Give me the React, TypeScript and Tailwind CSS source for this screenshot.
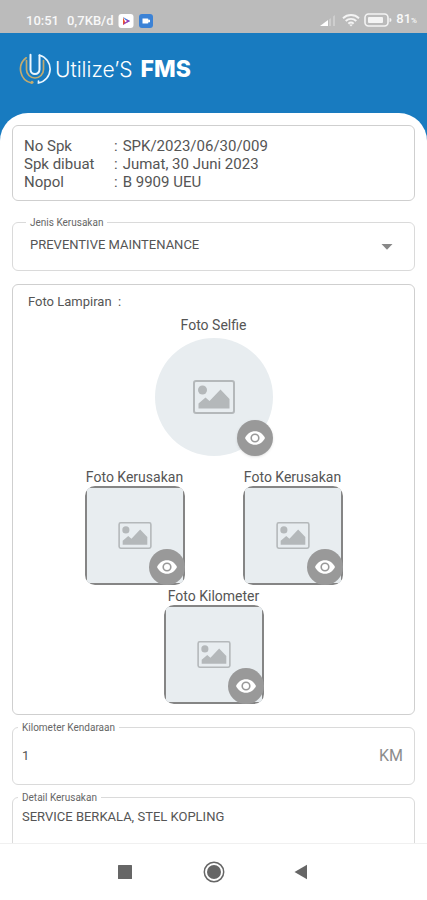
import type { ReactNode } from "react";

const SPK_INFO = [
  { label: "No Spk", value: "SPK/2023/06/30/009" },
  { label: "Spk dibuat", value: "Jumat, 30 Juni 2023" },
  { label: "Nopol", value: "B 9909 UEU" },
];

const StatusBar = () => (
  <div className="flex h-[33px] shrink-0 items-end bg-[#bbbbbb] pb-1 pl-[26px] pr-2.5 text-[13px] font-medium text-[#f8f8f8]">
    <span className="leading-4">10:51</span>
    <span className="ml-2 leading-4">0,7KB/d</span>
    <svg className="ml-1 h-4 w-4" viewBox="0 0 16 16" aria-hidden="true">
      <rect x="0.5" y="1" width="15" height="14" rx="3" fill="#fff" />
      <path d="M5 4v8l2.5-2z" fill="#e8542f" />
      <path d="M5 4l7 4-2.5 1.4z" fill="#3a7be0" />
      <path d="M5 12l7-4-3.4-1.4z" fill="#9a3fb5" />
      <path d="M7 6.8v2.4L9.2 8z" fill="#fff" />
    </svg>
    <svg className="ml-1 h-4 w-4" viewBox="0 0 16 16" aria-hidden="true">
      <rect x="1" y="1" width="14" height="14" rx="3" fill="#3b82d6" />
      <path d="M4.500 5.500h5a1 1 0 0 1 1 1v.8l1.500-.8v3l-1.500-.8v.8a1 1 0 0 1-1 1h-5z" fill="#fff" />
    </svg>

    <div className="ml-auto flex items-center gap-1">
      <svg className="h-4 w-5" viewBox="0 0 20 16" aria-hidden="true">
        <path d="M2 14l8-6v6z" fill="#fff" />
        <path d="M11 7.500l2-1.500v8h-2zM15 4.500l2-1.500v11h-2z" fill="#cecece" />
      </svg>
      <svg className="h-4 w-[18px]" viewBox="0 0 18 16" fill="none" stroke="#f4f4f4" strokeWidth="1.900" aria-hidden="true">
        <path d="M1 6.200c4.600-4.300 11.400-4.300 16 0M3.700 9c3-2.800 7.600-2.800 10.600 0M6.300 11.600c1.600-1.400 3.800-1.400 5.400 0" />
        <path d="M9 14.500l-1.800-2h3.600z" fill="#f4f4f4" stroke="none" />
      </svg>
      <svg className="h-4 w-7" viewBox="0 0 28 16" aria-hidden="true">
        <rect x="1" y="2" width="23" height="12" rx="3.500" fill="none" stroke="#f4f4f4" strokeWidth="1.600" />
        <rect x="4" y="5" width="15" height="6" rx="1" fill="#f4f4f4" />
        <path d="M25.500 6v4a2 2 0 0 0 2-2 2 2 0 0 0-2-2z" fill="#f4f4f4" />
      </svg>
      <span className="leading-4">
        81<span className="text-[8px]">%</span>
      </span>
    </div>
  </div>
);

const Logo = () => (
  <svg className="h-8 w-8" viewBox="0 0 32 32" fill="none" strokeLinecap="round" aria-hidden="true">
    <path d="M7.200 4.800A14.200 14.200 0 0 0 12.500 30" stroke="#c2ab70" strokeWidth="1.700" />
    <path d="M7.500 7.500V16.500a8.500 8.500 0 0 0 17 0V7.500" stroke="#c2ab70" strokeWidth="1.700" />
    <path d="M20.500 2.300A14.200 14.200 0 0 1 19.500 30v-2" stroke="#eaf6ff" strokeWidth="1.700" />
    <path d="M11.500 1.800V16.500a4.500 4.500 0 0 0 9 0V2.300" stroke="#eaf6ff" strokeWidth="2" />
    <circle cx="13" cy="29.300" r="1.500" fill="#c2ab70" />
  </svg>
);

const PictureIcon = ({ className }: { className: string }) => (
  <svg className={className} viewBox="0 0 42 34" aria-hidden="true">
    <rect x="1" y="1" width="40" height="32" rx="2" fill="none" stroke="#b4b8ba" strokeWidth="2" />
    <circle cx="9.500" cy="10" r="4.500" fill="#b4b8ba" />
    <path d="M5.500 28.500v-5l7-6 4 3.500L27.500 9.500l9 9.500v9.500z" fill="#b4b8ba" />
  </svg>
);

const ViewButton = ({ label, className }: { label: string; className: string }) => (
  <button
    type="button"
    aria-label={label}
    className={`absolute flex h-9 w-9 items-center justify-center rounded-full bg-[#999999] ${className}`}
  >
    <svg className="h-5 w-5" viewBox="0 0 20 20" aria-hidden="true">
      <path d="M0 10C2 5.700 5.700 3.200 10 3.200S18 5.700 20 10c-2 4.300-5.700 6.800-10 6.800S2 14.300 0 10z" fill="#fff" />
      <circle cx="10" cy="10" r="3.800" fill="#fff" stroke="#999999" strokeWidth="1.600" />
    </svg>
  </button>
);

const PhotoTile = ({ title }: { title: string }) => (
  <div className="flex flex-col items-center">
    <span className="text-sm leading-[18px]">{title}</span>
    <div className="relative h-[99px] w-[100px] rounded-[10px] border-2 border-[#858585]">
      <div className="flex h-full items-center justify-center rounded-[3px] bg-[#e8edf0]">
        <PictureIcon className="h-[27px] w-[34px]" />
      </div>
      <ViewButton label={`Lihat ${title}`} className="-bottom-0.5 -right-0.5" />
    </div>
  </div>
);

// Outlined box with its label sitting on the top border
const Field = ({ id, label, labelClass, className, children }: {
  id: string;
  label: string;
  labelClass: string;
  className: string;
  children: ReactNode;
}) => (
  <div className={`relative rounded-md border border-[#dadada] ${className}`}>
    <label htmlFor={id} className={`absolute -top-2 bg-white px-1 text-[10px] leading-4 text-[#666] ${labelClass}`}>
      {label}
    </label>
    {children}
  </div>
);

const App = () => {
  return (
    <div className="flex h-screen flex-col bg-[#187bc0] font-['Roboto',sans-serif] text-[#555]">
      <StatusBar />

      <header className="flex h-20 shrink-0 items-center pb-2 pl-[19px] text-white">
        <Logo />
        <h1 className="ml-1 flex items-baseline gap-2 font-['Inter',sans-serif] leading-8">
          <span className="text-[21px] font-light">Utilize’S</span>
          <span className="text-[23px] font-extrabold">FMS</span>
        </h1>
      </header>

      <main className="min-h-0 flex-1 overflow-hidden rounded-t-[28px] bg-white px-3 pt-3">
        <dl className="h-[76px] rounded-md border border-[#cfcfcf] px-[11px] pt-[11px] text-[15px] leading-[18px]">
          {SPK_INFO.map((row) => (
            <div key={row.label} className="flex">
              <dt className="w-[90px]">{row.label}</dt>
              <dd className="flex gap-[5px]">
                <span>:</span>
                <span>{row.value}</span>
              </dd>
            </div>
          ))}
        </dl>

        <Field id="jenis" label="Jenis Kerusakan" labelClass="left-[13px]" className="mt-[21px] h-[49px]">
          <select id="jenis" className="h-11 w-full appearance-none bg-transparent px-[17px] text-[13px]">
            <option>PREVENTIVE MAINTENANCE</option>
          </select>
          <svg className="pointer-events-none absolute right-[21px] top-[21px] h-1.5 w-3" viewBox="0 0 12 6" aria-hidden="true">
            <path d="M0.500 0h11L6 5.800z" fill="#888" />
          </svg>
        </Field>

        <section className="mt-[13px] h-[431px] rounded-md border border-[#cfcfcf] pt-2">
          <h2 className="pl-[15px] text-[13px] leading-[18px]">Foto Lampiran&nbsp; :</h2>

          <div className="mt-[5px] flex flex-col items-center">
            <span className="text-sm leading-[18px]">Foto Selfie</span>
            <div className="relative mt-1 flex h-[118px] w-[118px] items-center justify-center rounded-full bg-[#e8edf0]">
              <PictureIcon className="h-[34px] w-[42px]" />
              <ViewButton label="Lihat Foto Selfie" className="bottom-0 right-0 shadow" />
            </div>
          </div>

          <div className="mt-3 flex justify-center gap-[58px]">
            <PhotoTile title="Foto Kerusakan" />
            <PhotoTile title="Foto Kerusakan" />
          </div>
          <div className="mt-[2px] flex justify-center">
            <PhotoTile title="Foto Kilometer" />
          </div>
        </section>

        <Field id="km" label="Kilometer Kendaraan" labelClass="left-[5px]" className="mt-3 flex h-[58px] items-center px-[9px]">
          <input id="km" type="text" inputMode="numeric" defaultValue="1" className="min-w-0 flex-1 bg-transparent text-[13px] outline-none" />
          <span className="pr-0.5 text-base text-[#8c8c8c]">KM</span>
        </Field>

        <Field id="detail" label="Detail Kerusakan" labelClass="left-[5px]" className="mt-3 h-[100px] px-[9px] pt-2.5">
          <textarea
            id="detail"
            defaultValue="SERVICE BERKALA, STEL KOPLING"
            className="h-20 w-full resize-none bg-transparent text-[13px] leading-[18px] outline-none"
          />
        </Field>
      </main>

      <nav className="flex h-[57px] shrink-0 items-center justify-center gap-[69px] border-t border-[#f0f0f0] bg-white text-[#666]">
        <button type="button" aria-label="Aplikasi terbaru" className="flex h-6 w-[18px] items-center justify-center">
          <svg className="h-3.5 w-3.5" viewBox="0 0 14 14" aria-hidden="true">
            <rect width="14" height="14" rx="0.500" fill="currentColor" />
          </svg>
        </button>
        <button type="button" aria-label="Beranda">
          <svg className="h-[22px] w-[22px]" viewBox="0 0 22 22" aria-hidden="true">
            <circle cx="11" cy="11" r="9.700" fill="none" stroke="currentColor" strokeWidth="1.500" />
            <circle cx="11" cy="11" r="7" fill="currentColor" />
          </svg>
        </button>
        <button type="button" aria-label="Kembali" className="flex h-6 w-[18px] items-center">
          <svg className="h-4 w-3.5" viewBox="0 0 14 16" aria-hidden="true">
            <path d="M0.500 8L13 0.700v14.600z" fill="currentColor" />
          </svg>
        </button>
      </nav>
    </div>
  );
};

export default App;
